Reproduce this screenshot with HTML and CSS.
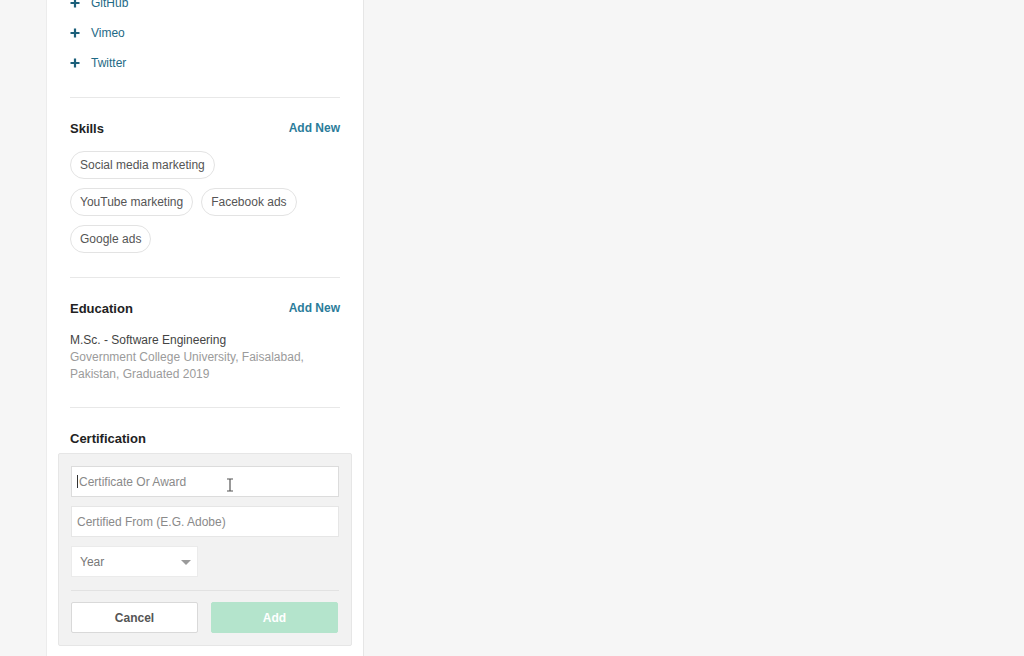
FILE: index.html
```html
<!DOCTYPE html>
<html>
<head>
<meta charset="utf-8">
<link rel="stylesheet" href="styles.css">
</head>
<body>
<div class="page">
  <div class="card">
    <ul class="links">
      <li><span class="plus"><svg width="10" height="10" viewBox="0 0 10 10"><path d="M5 0.5v9M0.5 5h9" stroke="currentColor" stroke-width="2.2"/></svg></span>GitHub</li>
      <li><span class="plus"><svg width="10" height="10" viewBox="0 0 10 10"><path d="M5 0.5v9M0.5 5h9" stroke="currentColor" stroke-width="2.2"/></svg></span>Vimeo</li>
      <li><span class="plus"><svg width="10" height="10" viewBox="0 0 10 10"><path d="M5 0.5v9M0.5 5h9" stroke="currentColor" stroke-width="2.2"/></svg></span>Twitter</li>
    </ul>
    <hr class="divider">
    <section class="section">
      <div class="head"><h3>Skills</h3><a class="add">Add New</a></div>
      <div class="chips">
        <span class="chip">Social media marketing</span>
        <span class="chip">YouTube marketing</span>
        <span class="chip">Facebook ads</span>
        <span class="chip">Google ads</span>
      </div>
    </section>
    <hr class="divider">
    <section class="section">
      <div class="head"><h3>Education</h3><a class="add">Add New</a></div>
      <div class="edu">
        <div class="degree">M.Sc. - Software Engineering</div>
        <div class="school">Government College University, Faisalabad, Pakistan, Graduated 2019</div>
      </div>
    </section>
    <hr class="divider">
    <section class="section cert">
      <div class="head"><h3>Certification</h3></div>
      <div class="form">
        <div class="input focused"><span class="caret"></span><span class="ph">Certificate Or Award</span>
          <svg class="ibeam" width="8" height="14" viewBox="0 0 8 14"><path d="M1 1h6M4 1v12M1 13h6" stroke="#555" stroke-width="1.2" fill="none"/></svg>
        </div>
        <div class="input"><span class="ph">Certified From (E.G. Adobe)</span></div>
        <div class="select"><span class="ph dark">Year</span><span class="arrow"></span></div>
        <hr class="formdiv">
        <div class="buttons">
          <button class="btn cancel">Cancel</button>
          <button class="btn addbtn">Add</button>
        </div>
      </div>
    </section>
  </div>
</div>
</body>
</html>
```
FILE: styles.css
```css
* { box-sizing: border-box; }
html, body { margin: 0; padding: 0; }
body {
  background: #f6f6f6;
  font-family: "Liberation Sans", Arial, sans-serif;
  font-size: 12px;
  height: 656px;
  overflow: hidden;
}
.page {
  padding-left: 46px;
  height: 656px;
}
.card {
  width: 318px;
  height: 700px;
  background: #fff;
  border-left: 1px solid #ececec;
  border-right: 1px solid #e6e6e6;
  padding: 0 23px;
  margin-top: -12px;
}
.links {
  list-style: none;
  margin: 0 0 19px;
  padding: 0;
}
.links li {
  display: flex;
  align-items: center;
  height: 30px;
  color: #1e6a86;
  font-size: 12px;
}
.plus {
  display: inline-flex;
  width: 21px;
  color: #1b5f7a;
}
.divider {
  border: 0;
  border-top: 1px solid #e8e8e8;
  margin: 0;
}
.section { padding: 20px 0 24px; }
.head {
  display: flex;
  justify-content: space-between;
  align-items: center;
  height: 20px;
}
.head h3 {
  margin: 0;
  font-size: 13px;
  font-weight: bold;
  color: #222;
}
.add {
  color: #2b7c9a;
  font-size: 12px;
  font-weight: bold;
}
.chips {
  display: flex;
  flex-wrap: wrap;
  gap: 9px 8px;
  margin-top: 13px;
  width: 240px;
}
.chip {
  display: inline-flex;
  align-items: center;
  height: 28px;
  padding: 0 9px;
  border: 1px solid #e3e3e3;
  border-radius: 14px;
  color: #555;
  font-size: 12px;
}
.edu { margin-top: 14px; line-height: 17px; }
.degree { color: #444; }
.school { color: #9b9b9b; width: 240px; }
.cert { padding-bottom: 0; }
.form {
  margin: 5px -12px 0;
  background: #f2f2f2;
  border: 1px solid #e6e6e6;
  border-radius: 2px;
  padding: 12px;
}
.input {
  position: relative;
  display: flex;
  align-items: center;
  height: 31px;
  background: #fff;
  border: 1px solid #e6e6e6;
  padding: 0 5px;
  margin-bottom: 9px;
}
.input.focused { border-color: #dcdcdc; }
.caret {
  width: 1px;
  height: 13px;
  background: #333;
  margin-right: 1px;
}
.ph { color: #8a8a8a; font-size: 12px; }
.ph.dark { color: #777; }
.ibeam {
  position: absolute;
  left: 154px;
  top: 11px;
}
.select {
  display: flex;
  align-items: center;
  justify-content: space-between;
  width: 127px;
  height: 31px;
  background: #fff;
  border: 1px solid #ebebeb;
  padding: 0 6px 0 8px;
}
.arrow {
  width: 0;
  height: 0;
  border-left: 5px solid transparent;
  border-right: 5px solid transparent;
  border-top: 5px solid #9a9a9a;
  margin-top: 2px;
}
.formdiv {
  border: 0;
  border-top: 1px solid #e2e2e2;
  margin: 13px 0 11px;
}
.buttons {
  display: flex;
  gap: 13px;
}
.btn {
  width: 127px;
  height: 31px;
  font-family: "Liberation Sans", Arial, sans-serif;
  font-size: 12px;
  font-weight: bold;
  border-radius: 2px;
}
.cancel {
  background: #fff;
  border: 1px solid #d9d9d9;
  color: #555;
}
.addbtn {
  background: #b4e4cc;
  border: 1px solid #b4e4cc;
  color: #fff;
}
```
